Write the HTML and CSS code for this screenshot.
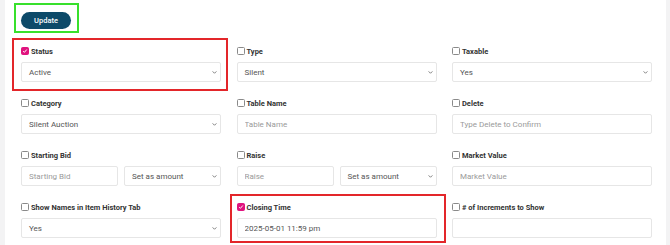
FILE: index.html
```html
<!DOCTYPE html>
<html lang="en">

<head>
    <meta charset="UTF-8">
    <meta name="viewport" content="width=device-width, initial-scale=1.0">
    <title>Item Settings</title>
    <link rel="stylesheet" href="styles.css">
</head>

<body>
    <div class="page">
        <div class="actions">
            <button class="btn-update" type="button">Update</button>
        </div>

        <div class="fields">
            <!-- row 1 -->
            <div class="field flag flag-status">
                <label class="field-label"><input type="checkbox" checked> Status</label>
                <div class="select"><span>Active</span><svg class="chev" viewBox="0 0 6 4"><path d="M0.5 0.5 L3 3 L5.5 0.5" /></svg></div>
            </div>
            <div class="field">
                <label class="field-label"><input type="checkbox"> Type</label>
                <div class="select"><span>Silent</span><svg class="chev" viewBox="0 0 6 4"><path d="M0.5 0.5 L3 3 L5.5 0.5" /></svg></div>
            </div>
            <div class="field">
                <label class="field-label"><input type="checkbox"> Taxable</label>
                <div class="select"><span>Yes</span><svg class="chev" viewBox="0 0 6 4"><path d="M0.5 0.5 L3 3 L5.5 0.5" /></svg></div>
            </div>

            <!-- row 2 -->
            <div class="field">
                <label class="field-label"><input type="checkbox"> Category</label>
                <div class="select"><span>Silent Auction</span><svg class="chev" viewBox="0 0 6 4"><path d="M0.5 0.5 L3 3 L5.5 0.5" /></svg></div>
            </div>
            <div class="field">
                <label class="field-label"><input type="checkbox"> Table Name</label>
                <input class="text" type="text" placeholder="Table Name">
            </div>
            <div class="field">
                <label class="field-label"><input type="checkbox"> Delete</label>
                <input class="text" type="text" placeholder="Type Delete to Confirm">
            </div>

            <!-- row 3 -->
            <div class="field">
                <label class="field-label"><input type="checkbox"> Starting Bid</label>
                <div class="pair">
                    <input class="text" type="text" placeholder="Starting Bid">
                    <div class="select"><span>Set as amount</span><svg class="chev" viewBox="0 0 6 4"><path d="M0.5 0.5 L3 3 L5.5 0.5" /></svg></div>
                </div>
            </div>
            <div class="field">
                <label class="field-label"><input type="checkbox"> Raise</label>
                <div class="pair">
                    <input class="text" type="text" placeholder="Raise">
                    <div class="select"><span>Set as amount</span><svg class="chev" viewBox="0 0 6 4"><path d="M0.5 0.5 L3 3 L5.5 0.5" /></svg></div>
                </div>
            </div>
            <div class="field">
                <label class="field-label"><input type="checkbox"> Market Value</label>
                <input class="text" type="text" placeholder="Market Value">
            </div>

            <!-- row 4 -->
            <div class="field">
                <label class="field-label"><input type="checkbox"> Show Names in Item History Tab</label>
                <div class="select"><span>Yes</span><svg class="chev" viewBox="0 0 6 4"><path d="M0.5 0.5 L3 3 L5.5 0.5" /></svg></div>
            </div>
            <div class="field flag flag-closing">
                <label class="field-label"><input type="checkbox" checked> Closing Time</label>
                <input class="text" type="text" value="2025-05-01 11:59 pm">
            </div>
            <div class="field">
                <label class="field-label"><input type="checkbox"> # of Increments to Show</label>
                <input class="text" type="text">
            </div>
        </div>
    </div>
</body>

</html>
```

FILE: styles.css
```css
body {
    margin: 0;
    background-color: #f3f3f4;
    font-family: Roboto, "Liberation Sans", sans-serif;
    color: #333;
}

.page {
    margin: 0 4px 0 5px;
    height: 245px;
    padding: 3px 0 0 9px;
    box-sizing: border-box;
    background-color: #fff;
    overflow: hidden;
}

/* green highlight round the button */
.actions {
    width: fit-content;
    padding: 7px 6px 2px 5px;
    border: 2px solid #38e02c;
}

.btn-update {
    display: block;
    width: 50px;
    height: 17px;
    padding: 0;
    border: none;
    border-radius: 9px;
    background-color: #0d4a69;
    color: #fff;
    font-family: inherit;
    font-size: 7.5px;
    font-weight: 500;
}

.fields {
    display: grid;
    grid-template-columns: 200px 200px 200px;
    column-gap: 15.5px;
    row-gap: 15px;
    margin: 12px 0 0 7px;
}

.field {
    position: relative;
}

.field-label {
    display: flex;
    align-items: center;
    gap: 2px;
    height: 12px;
    margin-bottom: 5px;
    font-size: 7.5px;
    font-weight: 700;
    color: #333;
}

.field-label input {
    appearance: none;
    width: 8px;
    height: 8px;
    margin: 0;
    border: 1px solid #8a8a8a;
    border-radius: 1.5px;
    background-color: #fff;
}

.field-label input:checked {
    border-color: #e0137e;
    background-color: #e0137e;
    background-image: url("data:image/svg+xml,%3Csvg xmlns='http://www.w3.org/2000/svg' viewBox='0 0 8 8'%3E%3Cpath d='M1.6 4.2 L3.2 5.8 L6.4 2' fill='none' stroke='white' stroke-width='1.3'/%3E%3C/svg%3E");
    background-size: 100% 100%;
}

.select,
.text {
    box-sizing: border-box;
    width: 100%;
    height: 20px;
    border: 1px solid #e6e6e6;
    border-radius: 2px;
    background-color: #fff;
    font-family: inherit;
    font-size: 8px;
    color: #555;
}

.select {
    display: flex;
    align-items: center;
    justify-content: space-between;
    padding: 0 3px 0 7px;
}

.text {
    display: block;
    padding: 0 7px;
    outline: none;
}

.text::placeholder {
    color: #9a9a9a;
}

.chev {
    width: 5px;
    height: 3px;
    fill: none;
    stroke: #666;
    stroke-width: 1.1;
}

.pair {
    display: grid;
    grid-template-columns: 97px 1fr;
    gap: 6px;
}

/* red highlight frames */
.flag::after {
    content: "";
    position: absolute;
    border: 2px solid #e3262a;
    pointer-events: none;
}

.flag-status::after {
    top: -7px;
    left: -9px;
    right: -7px;
    bottom: -9px;
}

.flag-closing::after {
    top: -7px;
    left: -6.5px;
    right: -9.5px;
    bottom: -5px;
}
```
